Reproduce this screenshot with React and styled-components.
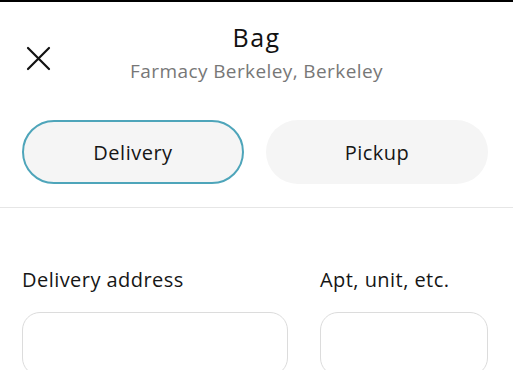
import React, { useState } from 'react';
import styled, { createGlobalStyle } from 'styled-components';

const GlobalStyle = createGlobalStyle`
  html, body {
    margin: 0;
    padding: 0;
    background: #fff;
  }
  body {
    font-family: "Open Sans", "Noto Sans", sans-serif;
    color: #161616;
  }
`;

const Page = styled.div`
  width: 513px;
  height: 370px;
  overflow: hidden;
  border-top: 2px solid #000;
  box-sizing: border-box;
`;

const Header = styled.header`
  display: grid;
  grid-template-columns: 60px 1fr 60px;
  align-items: start;
  height: 90px;
  padding-top: 20px;
  box-sizing: border-box;
`;

const CloseButton = styled.button`
  border: 0;
  background: none;
  padding: 0;
  margin: 24px 0 0 26px;
  width: 25px;
  height: 25px;
  display: flex;
  align-items: center;
  justify-content: center;
  cursor: pointer;
`;

const TitleBlock = styled.div`
  display: flex;
  flex-direction: column;
  align-items: center;
`;

const Title = styled.h1`
  margin: 0;
  font-size: 25px;
  font-weight: 400;
  line-height: 30px;
  letter-spacing: 1.4px;
  color: #111;
`;

const Subtitle = styled.div`
  font-size: 19px;
  line-height: 24px;
  letter-spacing: 0.4px;
  color: #777;
  margin-top: 7px;
`;

const Toggle = styled.div`
  display: grid;
  grid-template-columns: 1fr 1fr;
  gap: 22px;
  padding: 28px 25px 0 22px;
`;

const ModeButton = styled.button`
  height: 64px;
  border-radius: 32px;
  border: 2px solid ${(p) => (p.$active ? '#4ea5ba' : 'transparent')};
  background: #f5f5f5;
  font-family: inherit;
  font-size: 20px;
  letter-spacing: 0.5px;
  color: #161616;
  cursor: pointer;
`;

const Divider = styled.hr`
  border: 0;
  height: 1px;
  background: #e6e6e6;
  margin: 23px 0 0 0;
`;

const Form = styled.div`
  display: grid;
  grid-template-columns: 266px 168px;
  column-gap: 32px;
  padding: 59px 0 0 22px;
`;

const Field = styled.label`
  display: flex;
  flex-direction: column;
`;

const Label = styled.span`
  font-size: 20px;
  line-height: 26px;
  letter-spacing: 0.45px;
  color: #161616;
`;

const Input = styled.input`
  margin-top: 19px;
  height: 64px;
  border: 1px solid #dcdcdc;
  border-radius: 18px;
  box-sizing: border-box;
  font-family: inherit;
  font-size: 17px;
  padding: 0 16px;
  outline: none;
`;

export default function App() {
  const [mode, setMode] = useState('delivery');

  return (
    <>
      <GlobalStyle />
      <Page>
        <Header>
          <CloseButton aria-label="Close">
            <svg width="25" height="25" viewBox="0 0 25 25" fill="none">
              <path d="M2 2L23 23M23 2L2 23" stroke="#111" strokeWidth="2.2" strokeLinecap="round" />
            </svg>
          </CloseButton>
          <TitleBlock>
            <Title>Bag</Title>
            <Subtitle>Farmacy Berkeley, Berkeley</Subtitle>
          </TitleBlock>
          <div />
        </Header>
        <Toggle>
          <ModeButton $active={mode === 'delivery'} onClick={() => setMode('delivery')}>
            Delivery
          </ModeButton>
          <ModeButton $active={mode === 'pickup'} onClick={() => setMode('pickup')}>
            Pickup
          </ModeButton>
        </Toggle>
        <Divider />
        <Form>
          <Field>
            <Label>Delivery address</Label>
            <Input />
          </Field>
          <Field>
            <Label>Apt, unit, etc.</Label>
            <Input />
          </Field>
        </Form>
      </Page>
    </>
  );
}
